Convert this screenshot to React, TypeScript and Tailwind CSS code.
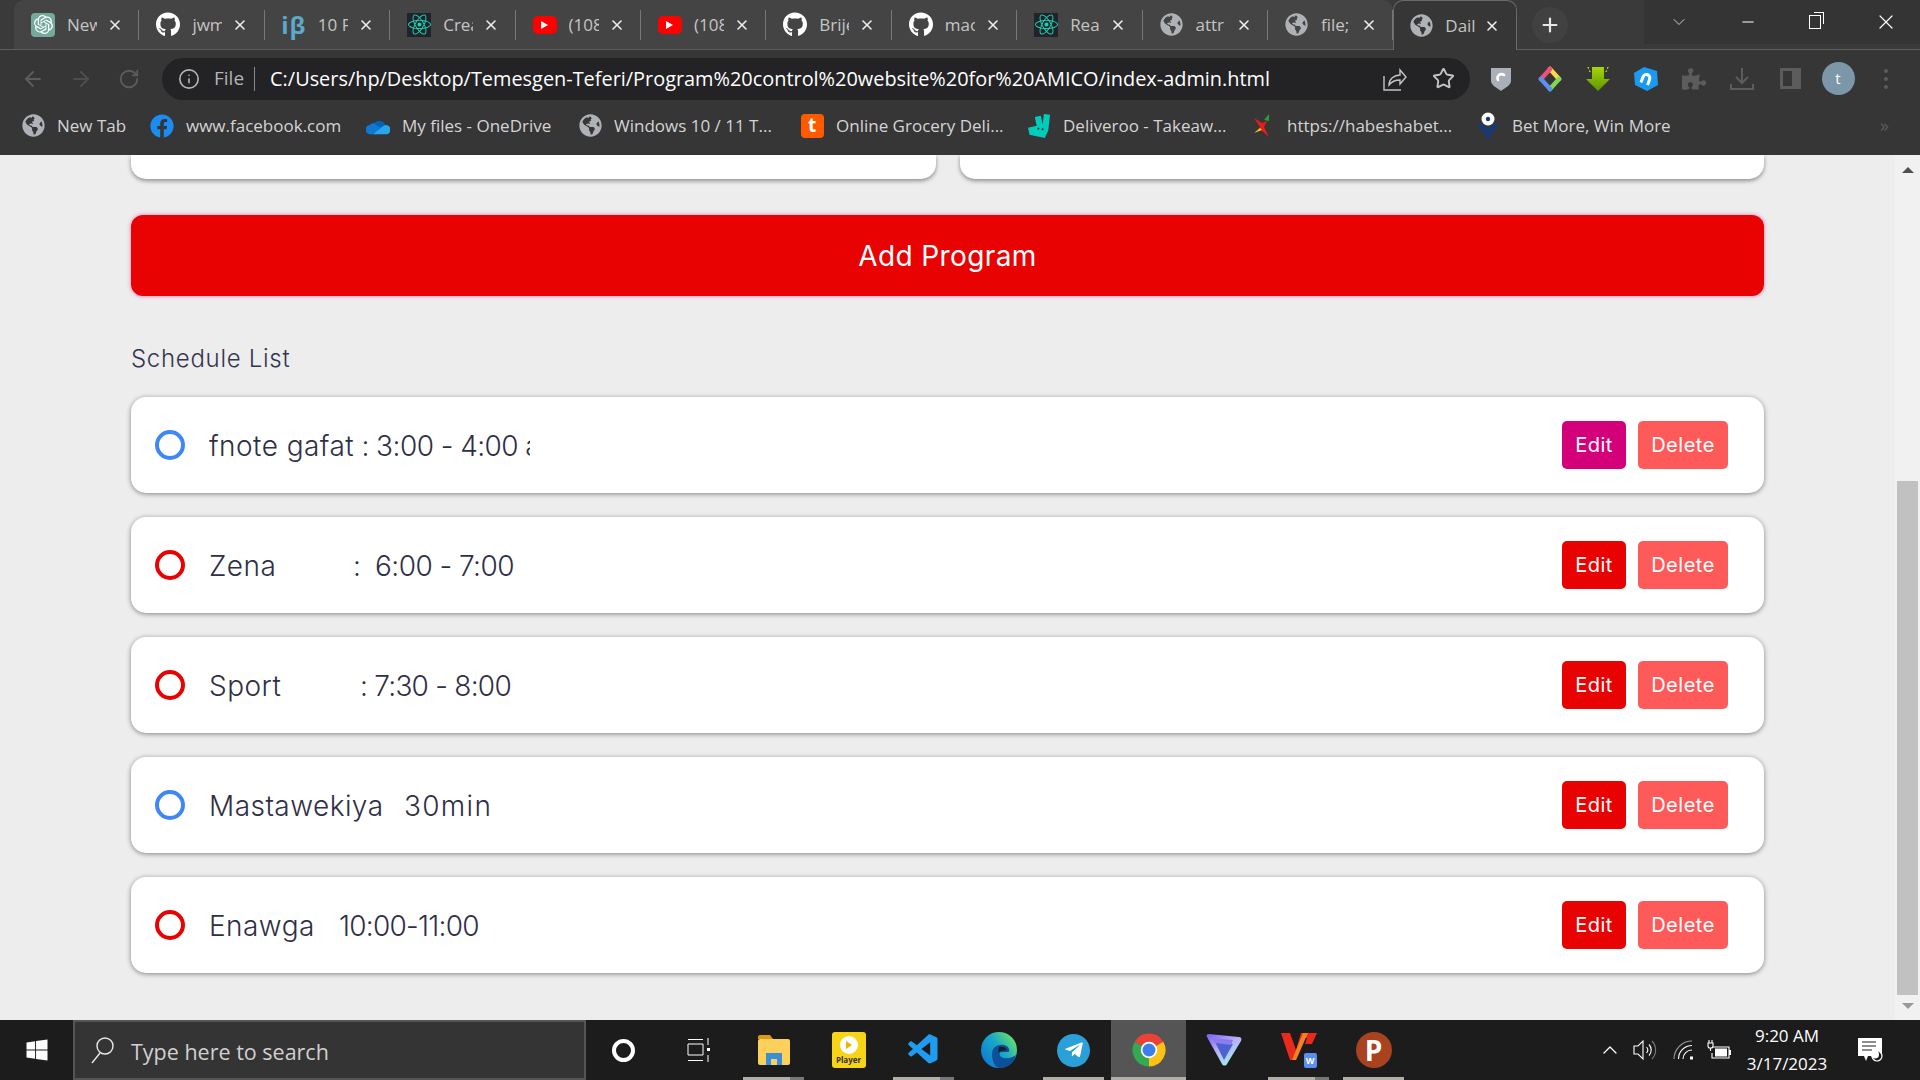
import React from 'react';
import { X, ArrowLeft, ArrowRight, RotateCw, Info, Star, Minus, ChevronDown, ChevronUp, Plus } from 'lucide-react';
import { FaGithub, FaReact, FaGlobeAmericas, FaFacebook, FaTelegramPlane, FaWindows, FaPuzzlePiece } from 'react-icons/fa';
import { SiOpenai, SiDeliveroo } from 'react-icons/si';
import { VscVscode } from 'react-icons/vsc';

const Globe = () => <FaGlobeAmericas size={23} className="text-[#aeb2b6]" />;

const YouTube = () => (
  <div className="w-[24px] h-[18px] rounded-[5px] bg-[#ff0000] flex items-center justify-center">
    <div className="w-0 h-0 border-y-[4px] border-y-transparent border-l-[7px] border-l-white" />
  </div>
);

const ReactIcon = () => (
  <div className="w-[24px] h-[24px] bg-[#20232a] flex items-center justify-center">
    <FaReact size={23} className="text-[#1fd0b0]" />
  </div>
);

const tabs = [
  { icon: <div className="w-[24px] h-[24px] rounded-[4px] bg-[#74aa9c] flex items-center justify-center"><SiOpenai size={19} className="text-white" /></div>, label: 'New' },
  { icon: <FaGithub size={25} className="text-white" />, label: 'jwm' },
  { icon: <span className="text-[24px] font-bold text-[#5ca9c9] leading-none tracking-[1px]">iβ</span>, label: '10 F' },
  { icon: <ReactIcon />, label: 'Crea' },
  { icon: <YouTube />, label: '(108' },
  { icon: <YouTube />, label: '(108' },
  { icon: <FaGithub size={25} className="text-white" />, label: 'Brije' },
  { icon: <FaGithub size={25} className="text-white" />, label: 'mac' },
  { icon: <ReactIcon />, label: 'Rea' },
  { icon: <Globe />, label: 'attr' },
  { icon: <Globe />, label: 'file;' },
];

const bookmarks = [
  { icon: <Globe />, label: 'New Tab', w: 'w-[129px]' },
  { icon: <FaFacebook size={24} className="text-[#1b8cf2]" />, label: 'www.facebook.com', w: 'w-[216px]' },
  { icon: <OneDrive />, label: 'My files - OneDrive', w: 'w-[212px]' },
  { icon: <Globe />, label: 'Windows 10 / 11 T...', w: 'w-[222px]' },
  { icon: <div className="w-[23px] h-[24px] rounded-[4px] bg-[#ff5a00] flex items-center justify-center text-white font-bold text-[19px] leading-none">t</div>, label: 'Online Grocery Deli...', w: 'w-[227px]' },
  { icon: <SiDeliveroo size={24} className="text-[#00ccbc]" />, label: 'Deliveroo - Takeaw...', w: 'w-[224px]' },
  { icon: <Habesha />, label: 'https://habeshabet...', w: 'w-[225px]' },
  { icon: <BetIcon />, label: 'Bet More, Win More', w: 'w-[220px]' },
];

const schedule = [
  { name: 'fnote gafat', nameW: 'w-auto', time: ' : 3:00 - 4:00 am', timeCls: 'tracking-[-0.55px]', dot: 'border-[#3f87f5]', edit: 'bg-[#d4007a]', clip: true },
  { name: 'Zena', nameW: 'w-[144px]', time: ':  6:00 - 7:00', timeCls: 'tracking-[-0.55px]', dot: 'border-[#e80202]', edit: 'bg-[#e80202]', clip: false },
  { name: 'Sport', nameW: 'w-[151px]', time: ': 7:30 - 8:00', timeCls: 'tracking-[-0.75px]', dot: 'border-[#e80202]', edit: 'bg-[#e80202]', clip: false },
  { name: 'Mastawekiya', nameW: 'w-[195px]', time: '30min', timeCls: 'tracking-[1.3px]', dot: 'border-[#3f87f5]', edit: 'bg-[#e80202]', clip: false },
  { name: 'Enawga', nameW: 'w-[130px]', time: '10:00-11:00', timeCls: 'tracking-[-0.75px]', dot: 'border-[#e80202]', edit: 'bg-[#e80202]', clip: false },
];

function OneDrive() {
  return (
    <svg width="26" height="18" viewBox="0 0 26 18">
      <path d="M9 6a7 7 0 0 1 12 2l-9 6-6-4z" fill="#0364b8" />
      <path d="M5 18a5 5 0 0 1-1-10 5 5 0 0 1 5-2l6 5-4 7z" fill="#0f78d4" />
      <path d="M21 8a5 5 0 0 1 1 10H8l9-8z" fill="#28a8ea" />
    </svg>
  );
}

function Habesha() {
  return (
    <svg width="20" height="26" viewBox="0 0 20 26">
      <path d="M1 5l8 5 5-2-3 6 5 10-8-7-4 1 3-4z" fill="#e81c1c" />
      <path d="M11 7l5-6v7z" fill="#2a9d3a" />
      <path d="M1 20l6-5 2 2z" fill="#f5c518" />
    </svg>
  );
}

function BetIcon() {
  return (
    <svg width="22" height="28" viewBox="0 0 22 28">
      <path d="M0 12l5 0 6 6 6-6 5 0-8 10-3 6-3-6z" fill="#123a78" />
      <circle cx="11" cy="7" r="6.5" fill="#fff" />
      <circle cx="11" cy="7" r="2.2" fill="#123a78" />
    </svg>
  );
}

function ChromeIcon() {
  return (
    <svg width="36" height="36" viewBox="0 0 24 24">
      <path d="M12 12L2.47 6.5A11 11 0 0 1 21.53 6.5z" fill="#ea4335" />
      <path d="M12 12L21.53 6.5A11 11 0 0 1 12 23z" fill="#fbc116" />
      <path d="M12 12L12 23A11 11 0 0 1 2.47 6.5z" fill="#34a853" />
      <circle cx="12" cy="12" r="5.5" fill="#fff" />
      <circle cx="12" cy="12" r="4.3" fill="#3d7fe8" />
    </svg>
  );
}

function EdgeIcon() {
  return (
    <svg width="36" height="36" viewBox="0 0 36 36">
      <defs>
        <linearGradient id="edgeGrad" x1="0.1" y1="0.8" x2="0.9" y2="0.2">
          <stop offset="0" stopColor="#0f7fd0" />
          <stop offset="0.55" stopColor="#19a8c8" />
          <stop offset="1" stopColor="#5fdc70" />
        </linearGradient>
      </defs>
      <circle cx="18" cy="18" r="18" fill="url(#edgeGrad)" />
      <path d="M11 22c0-7 6-10 12-9 4 1 6 4 5 7h-7c-3 0-3 3-1 5 3 2 10 2 15-2-2 8-9 13-16 13-5 0-8-7-8-14z" fill="#0c4f9a" />
      <path d="M18 15c3-1 7 0 8 3l-6 1c-2 0-3 2-3 3z" fill="#1c1c1c" />
    </svg>
  );
}

function ExplorerIcon() {
  return (
    <svg width="32" height="32" viewBox="0 0 32 32">
      <path d="M0 3a2 2 0 0 1 2-2h10l3 4H0z" fill="#d89b13" />
      <rect y="5" width="32" height="26" rx="2" fill="#fbd15b" />
      <path d="M8 31V19h16v12h-5v-6h-6v6z" fill="#3a8fd8" />
    </svg>
  );
}

function ProtonIcon() {
  return (
    <svg width="36" height="34" viewBox="0 0 36 34">
      <defs>
        <linearGradient id="protonGrad" x1="0" y1="0" x2="0.7" y2="1">
          <stop offset="0" stopColor="#7a5cf0" />
          <stop offset="0.5" stopColor="#b9b0f8" />
          <stop offset="1" stopColor="#9ff0ea" />
        </linearGradient>
      </defs>
      <path d="M3 1l30 3c2 0 3 2 2 4L21 31c-1 2-4 2-5 0L1 4c-1-2 0-3 2-3z" fill="url(#protonGrad)" />
      <path d="M9 9l18 2-9 16z" fill="#4a63d0" />
      <path d="M6 5l21 2-2 5-16-2z" fill="#8c7af0" />
    </svg>
  );
}

function WpsIcon() {
  return (
    <div className="relative w-[36px] h-[36px]">
      <svg width="36" height="30" viewBox="0 0 36 30">
        <path d="M0 1h9l6 17L20 1h16l-5 11h-7l2-6h-2l-9 22h-6z" fill="#e8291c" />
        <path d="M22 1h5L15 28h-4z" fill="#f58220" />
      </svg>
      <div className="absolute right-0 bottom-0 w-[13px] h-[15px] bg-[#5a8ef0] rounded-[2px] flex items-center justify-center text-white text-[9px] font-bold leading-none">W</div>
    </div>
  );
}

function PlayerIcon() {
  return (
    <div className="w-[34px] h-[36px] rounded-[3px] bg-[#f7d417] flex flex-col items-center justify-center">
      <div className="w-[18px] h-[18px] rounded-full bg-white flex items-center justify-center">
        <div className="w-0 h-0 border-y-[4px] border-y-transparent border-l-[6px] border-l-[#e0b800] ml-[1px]" />
      </div>
      <span className="text-[8px] font-bold leading-[11px] text-[#333]">Player</span>
    </div>
  );
}

function TaskViewIcon() {
  return (
    <svg width="24" height="24" viewBox="0 0 24 24" fill="none" stroke="#fff" strokeWidth="1">
      <path d="M1 1.5h15M1 22.5h15M1 6h15v11H1z" />
      <path d="M21 0v7M21 17v7" />
      <rect x="20" y="10" width="3" height="3" fill="#fff" stroke="none" />
    </svg>
  );
}

function SpeakerIcon() {
  return (
    <svg width="24" height="24" viewBox="0 0 24 24" fill="none" stroke="#fff" strokeWidth="1.1">
      <path d="M1 8h4l5-5v18l-5-5H1z" />
      <path d="M13.5 9a4.5 4.5 0 0 1 0 6M16 6.5a8 8 0 0 1 0 11" />
      <path d="M19 3a13 13 0 0 1 0 18" stroke="#777" />
    </svg>
  );
}

function WifiIcon() {
  return (
    <svg width="24" height="24" viewBox="0 0 24 24" fill="none" stroke="#fff" strokeWidth="1.1">
      <path d="M1 21A18 18 0 0 1 19 3" stroke="#9a9a9a" />
      <path d="M5.5 21A13.5 13.5 0 0 1 19 7.5" />
      <path d="M10 21A9 9 0 0 1 19 12" />
      <rect x="17" y="18.5" width="3" height="3" fill="#fff" stroke="none" />
    </svg>
  );
}

function BatteryIcon() {
  return (
    <svg width="24" height="20" viewBox="0 0 24 20" fill="none" stroke="#fff" strokeWidth="1.1">
      <path d="M2 0v3M5 0v3M1 3h5v3a2 2 0 0 1-2 2H3a2 2 0 0 1-2-2zM3.5 8v3" />
      <path d="M6 7h16v11H5v-5" />
      <rect x="8" y="8.5" width="12" height="8" fill="#fff" stroke="none" />
      <rect x="22" y="10" width="2" height="5" fill="#fff" stroke="none" />
    </svg>
  );
}

function NotifyIcon() {
  return (
    <svg width="26" height="26" viewBox="0 0 26 26">
      <path d="M0 1h24v18H10l-2 5-2-5H0z" fill="#fff" />
      <path d="M4 5h14M4 9h14M4 13h10" stroke="#1c1c1c" strokeWidth="1.2" />
      <circle cx="19" cy="19" r="5" fill="#1c1c1c" stroke="#fff" strokeWidth="1.2" />
      <circle cx="17" cy="17.5" r="4" fill="#fff" />
    </svg>
  );
}

function SearchIcon() {
  return (
    <svg width="24" height="28" viewBox="0 0 24 28" fill="none" stroke="#e8e8e8" strokeWidth="1.4">
      <circle cx="14" cy="10" r="8" />
      <path d="M9 17L1 27" />
    </svg>
  );
}

function ShareIcon() {
  return (
    <svg width="24" height="24" viewBox="0 0 24 24" fill="none" stroke="#c4c4c4" strokeWidth="1.4">
      <path d="M1 9v14h17" />
      <path d="M6 18c0-6 5-10 11-10V3l6 7-6 7v-4c-5 0-8 1-11 5z" />
    </svg>
  );
}

function GreenArrow() {
  return (
    <svg width="24" height="24" viewBox="0 0 24 24">
      <defs>
        <linearGradient id="arrowGrad" x1="0" y1="0" x2="0" y2="1">
          <stop offset="0" stopColor="#a5d60a" />
          <stop offset="1" stopColor="#5f9400" />
        </linearGradient>
      </defs>
      <path d="M1 0h2v5h2zM23 0h-2v5h-2zM6 0h12v12h6L12 24 0 12h6z" fill="url(#arrowGrad)" />
    </svg>
  );
}

function DiamondIcon() {
  return (
    <svg width="24" height="26" viewBox="0 0 24 26" fill="none" strokeWidth="4.5" strokeLinecap="round">
      <path d="M12 3l9 10" stroke="#ffd84a" />
      <path d="M12 3L3 13" stroke="#f0507a" />
      <path d="M21 13l-9 10" stroke="#7ed957" />
      <path d="M12 23L3 13" stroke="#5b8ff0" />
    </svg>
  );
}

function ShieldIcon() {
  return (
    <svg width="20" height="24" viewBox="0 0 20 24">
      <path d="M0 1h20v13c0 4-6 7-10 10C6 21 0 18 0 14z" fill="#aab0b8" />
      <path d="M7 13a4 4 0 0 1 6-5" fill="none" stroke="#fff" strokeWidth="2.6" strokeLinecap="round" />
    </svg>
  );
}

function BlueHexIcon() {
  return (
    <svg width="24" height="24" viewBox="0 0 24 24">
      <path d="M10 0l13 4 1 14-11 6L1 18 0 6z" fill="#1b9af0" />
      <g transform="rotate(20 12 12)">
        <path d="M7 17v-6a5 5 0 0 1 10 0v6h-3v-6a2 2 0 0 0-4 0v6z" fill="#fff" />
      </g>
    </svg>
  );
}

const TabItem = ({ icon, label }: { icon: React.ReactNode; label: string }) => (
  <div className="w-[125.4px] h-[30px] self-center flex items-center pl-[17px] border-r border-[#777] shrink-0">
    <div className="w-[24px] flex justify-center shrink-0">{icon}</div>
    <span className="ml-[12px] w-[30px] overflow-hidden whitespace-nowrap text-[17px] text-[#c4c4c4]">{label}</span>
    <X size={16} className="ml-[10px] text-[#ededed] shrink-0" strokeWidth={2.4} />
  </div>
);

const Slot = ({ children, bar, stack, active }: { children: React.ReactNode; bar?: boolean; stack?: boolean; active?: boolean }) => (
  <div className={`relative w-[75px] h-full flex items-center justify-center ${active ? 'bg-[#555]' : ''}`}>
    {children}
    {active && <div className="absolute bottom-0 inset-x-0 h-[3px] bg-[#b0b0a8]" />}
    {bar && (
      <div className="absolute bottom-0 inset-x-[7px] h-[3px] flex">
        <div className="flex-1 bg-[#b0b0a8]" />
        {stack && <div className="w-[14px] bg-[#777]" />}
      </div>
    )}
  </div>
);

export default function App() {
  return (
    <div className="w-[1920px] h-[1080px] flex flex-col overflow-hidden bg-[#ededed] font-['Open_Sans',sans-serif]">
      {/* tab strip */}
      <div className="h-[50px] shrink-0 flex items-stretch bg-[#3a3a3a] border-b border-[#5e5e5e] pl-[14px]">
        <div className="flex items-stretch bg-[#444] rounded-t-[10px]">
          {tabs.map((t, i) => (
            <TabItem key={i} icon={t.icon} label={t.label} />
          ))}
        </div>
        <div className="w-[124px] shrink-0 h-[50px] -mb-px rounded-t-[10px] bg-[#363636] border border-b-0 border-[#6a6a6a] flex items-center pl-[15px]">
          <div className="w-[24px] flex justify-center shrink-0"><Globe /></div>
          <span className="ml-[12px] w-[30px] overflow-hidden whitespace-nowrap text-[17px] text-[#c4c4c4]">Dail</span>
          <X size={16} className="ml-[9px] text-[#ededed] shrink-0" strokeWidth={2.4} />
        </div>
        <div className="ml-[15px] w-[36px] h-[36px] self-center rounded-full bg-[#414141] flex items-center justify-center">
          <Plus size={22} className="text-[#e6e6e6]" strokeWidth={2.4} />
        </div>
        <div className="ml-auto flex h-[44px]">
          <div className="w-[69px] bg-[#343434] flex items-center justify-center"><ChevronDown size={20} className="text-[#ccc]" strokeWidth={1.2} /></div>
          <div className="w-[69px] bg-[#343434] flex items-center justify-center"><Minus size={18} className="text-white" strokeWidth={1.4} /></div>
          <div className="w-[69px] bg-[#343434] flex items-center justify-center pr-[3px]">
            <div className="relative w-[12px] h-[14px] border border-white">
              <div className="absolute -top-[4px] -right-[4px] w-[10px] h-[12px] border-t border-r border-white" />
            </div>
          </div>
          <div className="w-[69px] bg-[#343434] flex items-center justify-center"><X size={24} className="text-white" strokeWidth={1.2} /></div>
        </div>
      </div>

      {/* toolbar */}
      <div className="h-[55px] shrink-0 flex items-center bg-[#363636] pl-[9px] pt-[2px]">
        <div className="w-[48px] flex justify-center"><ArrowLeft size={24} className="text-[#5c5c5c]" strokeWidth={2} /></div>
        <div className="w-[48px] flex justify-center"><ArrowRight size={24} className="text-[#4e4e4e]" strokeWidth={2} /></div>
        <div className="w-[48px] flex justify-center"><RotateCw size={22} className="text-[#5c5c5c]" strokeWidth={2} /></div>
        <div className="ml-[9px] w-[1308px] h-[42px] rounded-full bg-[#232325] flex items-center pl-[16px] pr-[3px]">
          <Info size={22} className="text-[#b4b4b4]" strokeWidth={1.8} />
          <span className="ml-[14px] text-[19px] text-[#b4b4b4]">File</span>
          <div className="ml-[10px] w-px h-[24px] bg-[#8a8a8a]" />
          <span className="ml-[15px] text-[19.9px] text-white whitespace-nowrap">C:/Users/hp/Desktop/Temesgen-Teferi/Program%20control%20website%20for%20AMICO/index-admin.html</span>
          <div className="ml-auto w-[48px] flex justify-center"><ShareIcon /></div>
          <div className="w-[48px] flex justify-center"><Star size={23} className="text-[#c4c4c4]" strokeWidth={2} /></div>
        </div>
        <div className="ml-[7px] flex items-center">
          <div className="w-[48px] flex justify-center"><ShieldIcon /></div>
          <div className="w-[48px] flex justify-center pl-[2px]"><DiamondIcon /></div>
          <div className="w-[48px] flex justify-center pl-[2px]"><GreenArrow /></div>
          <div className="w-[48px] flex justify-center pl-[2px]"><BlueHexIcon /></div>
          <div className="w-[48px] flex justify-center pl-[2px]"><FaPuzzlePiece size={24} className="text-[#5c5c5c]" /></div>
          <div className="w-[48px] flex justify-center pl-[2px]">
            <svg width="24" height="24" viewBox="0 0 24 24" fill="none" stroke="#5c5c5c" strokeWidth="2">
              <path d="M12 1v15M6 10l6 6 6-6M1 17v5h22v-5" />
            </svg>
          </div>
          <div className="w-[48px] flex justify-center pl-[2px]"><div className="w-[21px] h-[21px] border-[3px] border-r-[9px] border-[#5c5c5c]" /></div>
          <div className="w-[48px] flex justify-center pl-[2px]"><div className="w-[33px] h-[33px] rounded-full bg-[#7b97a8] flex items-center justify-center text-white text-[15px]">t</div></div>
          <div className="w-[46px] flex flex-col items-center gap-[4px] pl-[3px]">
            <div className="w-[4px] h-[4px] rounded-full bg-[#5c5c5c]" />
            <div className="w-[4px] h-[4px] rounded-full bg-[#5c5c5c]" />
            <div className="w-[4px] h-[4px] rounded-full bg-[#5c5c5c]" />
          </div>
        </div>
      </div>

      {/* bookmarks */}
      <div className="h-[50px] shrink-0 flex items-center bg-[#363636] pl-[21px] pb-[9px]">
        {bookmarks.map((b, i) => (
          <div key={i} className={`${b.w} flex items-center shrink-0`}>
            <div className="w-[24px] flex justify-center shrink-0">{b.icon}</div>
            <span className="ml-[12px] text-[17px] text-[#d4d4d4] whitespace-nowrap">{b.label}</span>
          </div>
        ))}
        <span className="ml-[184px] text-[18px] text-[#5c5c5c]">»</span>
      </div>

      {/* page */}
      <div className="flex-1 min-h-0 flex">
        <div className="flex-1 min-w-0 pl-[131px] pr-[131px] font-['Inter',sans-serif] text-[#2f2f47]">
          <div className="flex gap-[24px]">
            <div className="w-[805px] h-[24px] bg-white rounded-b-[15px] shadow-[0_2px_4px_rgba(0,0,0,0.4)]" />
            <div className="flex-1 h-[24px] bg-white rounded-b-[15px] shadow-[0_2px_4px_rgba(0,0,0,0.4)]" />
          </div>

          <button className="mt-[36px] w-full h-[81px] rounded-[12px] bg-[#e80202] text-white text-[28px] tracking-[0.4px] shadow-[0_0_4px_rgba(232,2,120,0.5)]">
            Add Program
          </button>

          <h2 className="mt-[48px] text-[24px] leading-[30px] font-light tracking-[0.7px] text-[#35354f]">Schedule List</h2>

          <div className="mt-[23px] flex flex-col gap-[24px]">
            {schedule.map((s) => (
              <div key={s.name} className="h-[96px] bg-white rounded-[15px] shadow-[0_1px_5px_rgba(0,0,0,0.45)] flex items-center pl-[24px] pr-[36px]">
                <div className={`w-[30px] h-[30px] rounded-full border-[4px] shrink-0 ${s.dot}`} />
                <div className={`ml-[24px] pt-[1px] text-[28px] font-light whitespace-pre flex tracking-[0.45px] ${s.clip ? 'w-[321px] overflow-hidden' : ''}`}>
                  <span className={s.nameW}>{s.name}</span>
                  <span className={s.timeCls}>{s.time}</span>
                </div>
                <button className={`ml-auto w-[64px] h-[48px] rounded-[5px] text-white text-[20px] tracking-[0.4px] ${s.edit}`}>Edit</button>
                <button className="ml-[12px] w-[90px] h-[48px] rounded-[5px] bg-[#ff5a5a] text-white text-[20px] tracking-[0.5px]">Delete</button>
              </div>
            ))}
          </div>
        </div>

        {/* scrollbar */}
        <div className="w-[25px] shrink-0 bg-[#f1f1f1] flex flex-col items-center">
          <div className="mt-[12px] w-0 h-0 border-x-[6px] border-x-transparent border-b-[6px] border-b-[#505050]" />
          <div className="mt-[308px] w-[21px] h-[514px] bg-[#c1c1c1]" />
          <div className="mt-[8px] w-0 h-0 border-x-[6px] border-x-transparent border-t-[6px] border-t-[#9a9a9a]" />
        </div>
      </div>

      {/* taskbar */}
      <div className="h-[60px] shrink-0 flex items-stretch bg-[#1c1c1c] font-['Open_Sans',sans-serif]">
        <div className="w-[73px] flex items-center justify-center"><FaWindows size={24} className="text-white" /></div>
        <div className="w-[513px] bg-[#343434] border-2 border-[#555] flex items-center pl-[16px]">
          <SearchIcon />
          <span className="ml-[16px] text-[21.5px] text-[#d0d0d0] pt-[4px]">Type here to search</span>
        </div>
        <Slot><div className="w-[23px] h-[23px] rounded-full border-[4px] border-white" /></Slot>
        <Slot><TaskViewIcon /></Slot>
        <Slot bar stack><ExplorerIcon /></Slot>
        <Slot><PlayerIcon /></Slot>
        <Slot bar stack><VscVscode size={36} className="text-[#1f9cf0]" /></Slot>
        <Slot><EdgeIcon /></Slot>
        <Slot bar>
          <div className="w-[33px] h-[33px] rounded-full bg-[#2a9fd8] flex items-center justify-center">
            <FaTelegramPlane size={20} className="text-white" />
          </div>
        </Slot>
        <Slot active><ChromeIcon /></Slot>
        <Slot><ProtonIcon /></Slot>
        <Slot bar stack><WpsIcon /></Slot>
        <Slot bar>
          <div className="w-[36px] h-[36px] rounded-full bg-[#a8421f] flex items-center justify-center text-white font-bold text-[28px] leading-none">P</div>
        </Slot>
        <div className="flex-1 flex items-center justify-end text-white">
          <ChevronUp size={24} strokeWidth={1.3} className="mr-[11px]" />
          <SpeakerIcon />
          <div className="ml-[16px]"><WifiIcon /></div>
          <div className="ml-[10px]"><BatteryIcon /></div>
          <div className="ml-[6px] w-[100px] flex flex-col items-center text-[17px] leading-[28px]">
            <span>9:20 AM</span>
            <span>3/17/2023</span>
          </div>
          <div className="ml-[21px] mr-[36px]"><NotifyIcon /></div>
        </div>
      </div>
    </div>
  );
}
